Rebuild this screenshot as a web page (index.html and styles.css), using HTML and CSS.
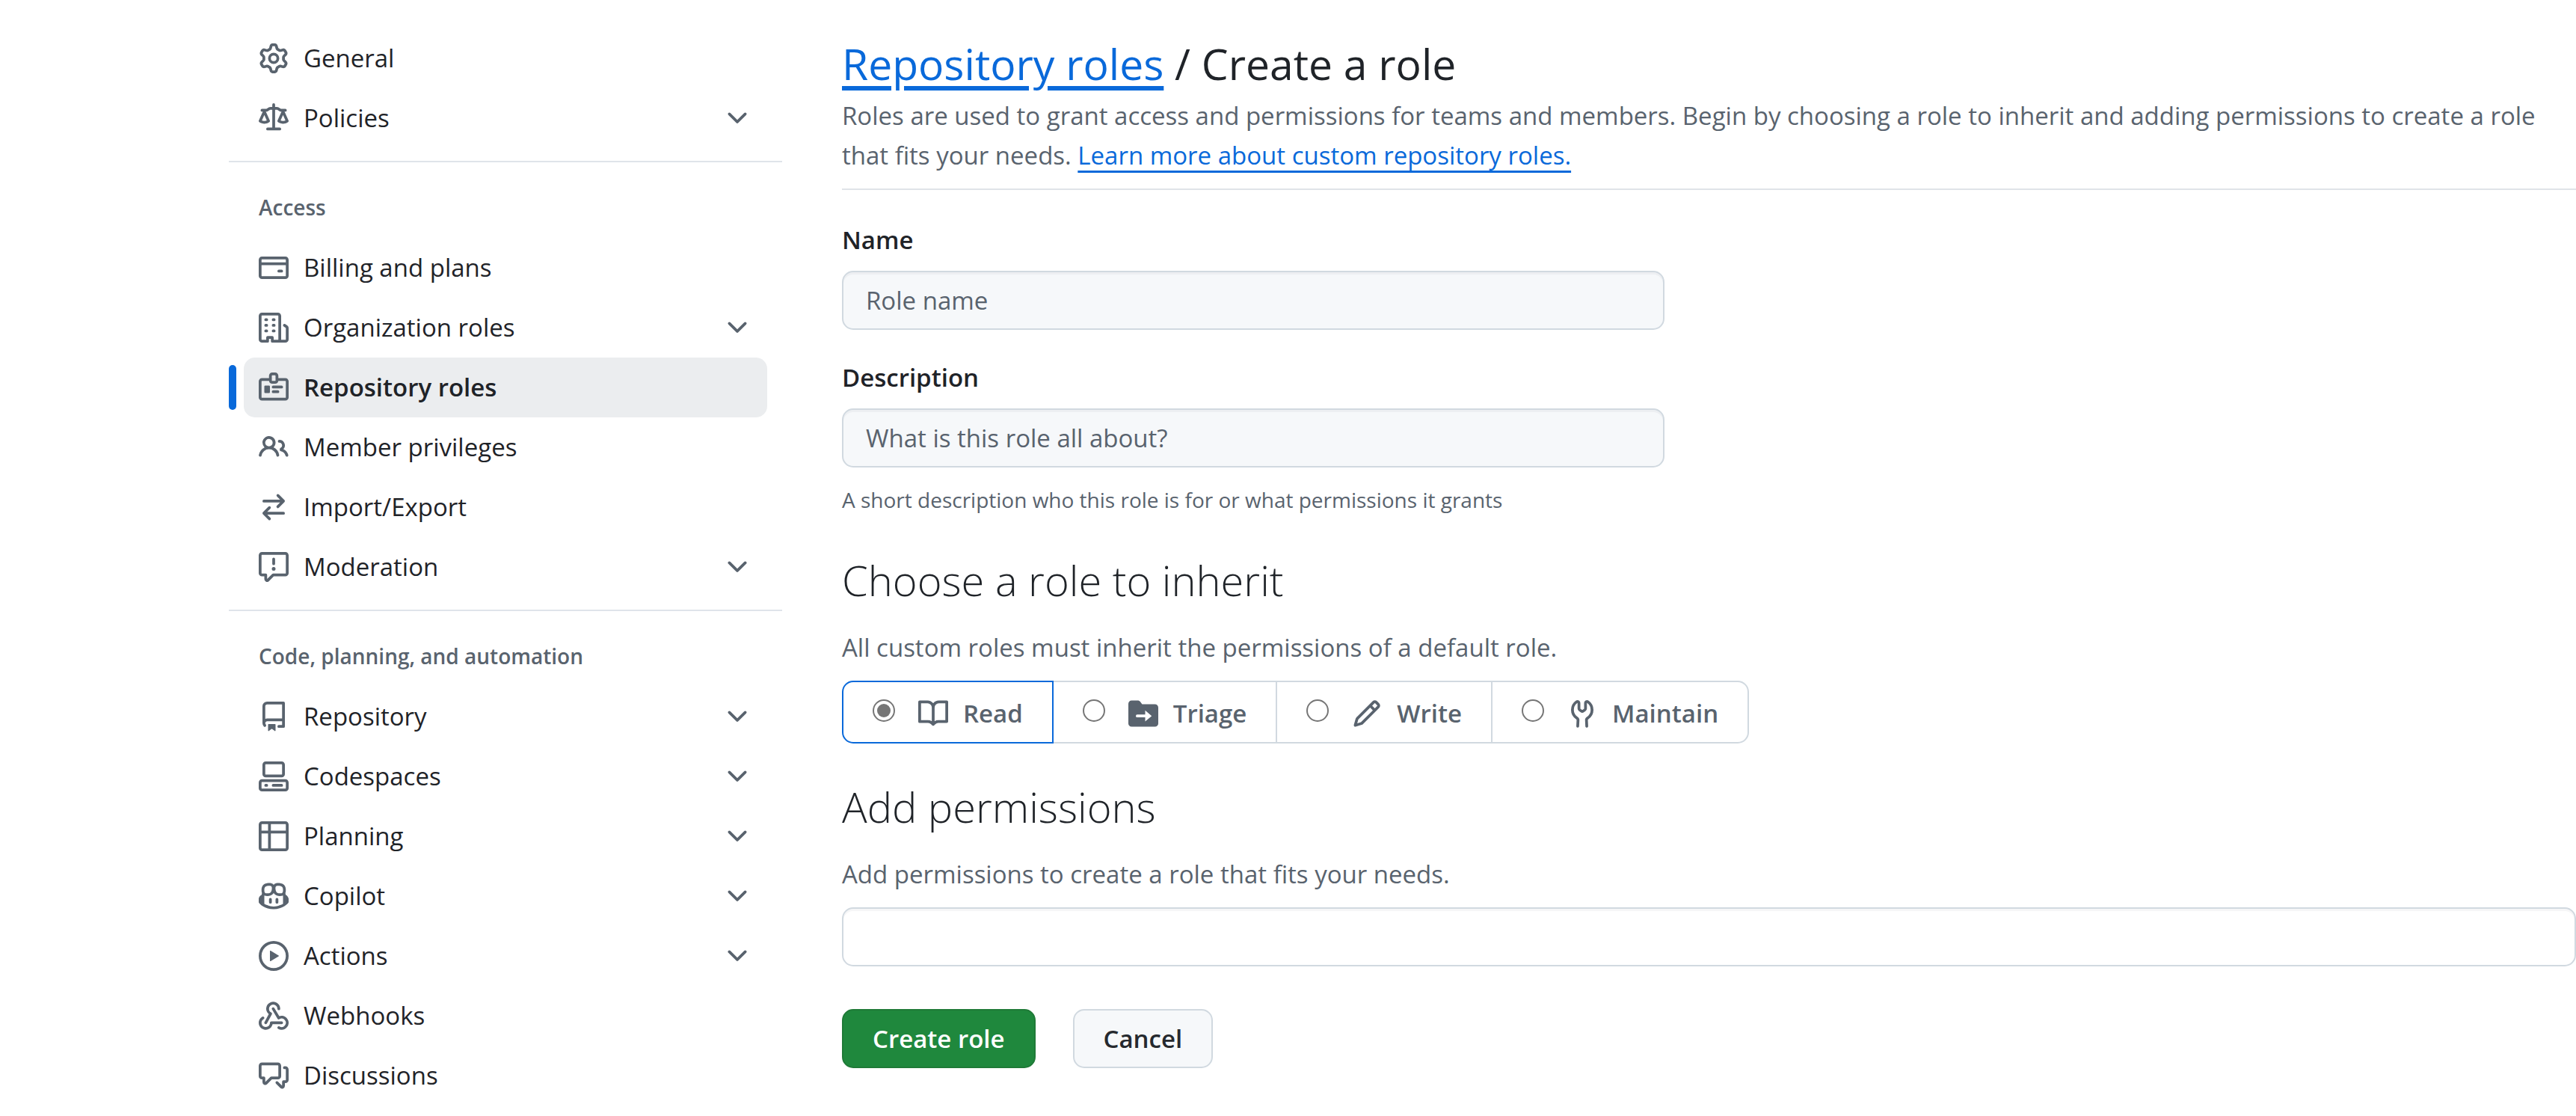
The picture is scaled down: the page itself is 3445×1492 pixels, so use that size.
FILE: index.html
```html
<!DOCTYPE html>
<html lang="en">
<head>
<meta charset="utf-8">
<title>Create a role</title>
<link rel="stylesheet" href="styles.css">
</head>
<body>
<svg class="sprite" aria-hidden="true">
  <symbol id="gear" viewBox="0 0 16 16"><path d="M8 0a8.2 8.2 0 0 1 .701.031C9.444.095 9.99.645 10.16 1.29l.288 1.107c.018.066.079.158.212.224.231.114.454.243.668.386.123.082.233.09.299.071l1.103-.303c.644-.176 1.392.021 1.82.63.27.385.506.792.704 1.218.315.675.111 1.422-.364 1.891l-.814.806c-.049.048-.098.147-.088.294.016.257.016.515 0 .772-.01.147.038.246.088.294l.814.806c.475.469.679 1.216.364 1.891a7.977 7.977 0 0 1-.704 1.217c-.428.61-1.176.807-1.82.63l-1.102-.302c-.067-.019-.177-.011-.3.071a5.909 5.909 0 0 1-.668.386c-.133.066-.194.158-.211.224l-.29 1.106c-.168.646-.715 1.196-1.458 1.26a8.006 8.006 0 0 1-1.402 0c-.743-.064-1.289-.614-1.458-1.26l-.289-1.106c-.018-.066-.079-.158-.212-.224a5.738 5.738 0 0 1-.668-.386c-.123-.082-.233-.09-.299-.071l-1.103.303c-.644.176-1.392-.021-1.82-.63a8.12 8.12 0 0 1-.704-1.218c-.315-.675-.111-1.422.363-1.891l.815-.806c.05-.048.098-.147.088-.294a6.214 6.214 0 0 1 0-.772c.01-.147-.038-.246-.088-.294l-.815-.806C.635 6.045.431 5.298.746 4.623a7.92 7.92 0 0 1 .704-1.217c.428-.61 1.176-.807 1.82-.63l1.102.302c.067.019.177.011.3-.071.214-.143.437-.272.668-.386.133-.066.194-.158.211-.224l.29-1.106C6.009.645 6.556.095 7.299.03 7.53.01 7.764 0 8 0Zm-.571 1.525c-.036.003-.108.036-.137.146l-.289 1.105c-.147.561-.549.967-.998 1.189-.173.086-.34.183-.5.29-.417.278-.97.423-1.529.27l-1.103-.303c-.109-.03-.175.016-.195.045-.22.312-.412.644-.573.99-.014.031-.021.11.059.19l.815.806c.411.406.562.957.53 1.456a4.709 4.709 0 0 0 0 .582c.032.499-.119 1.05-.53 1.456l-.815.806c-.081.08-.073.159-.059.19.162.346.353.677.573.989.02.03.085.076.195.046l1.102-.303c.56-.153 1.113-.008 1.53.27.161.107.328.204.501.29.447.222.85.629.997 1.189l.289 1.105c.029.109.101.143.137.146a6.6 6.6 0 0 0 1.142 0c.036-.003.108-.036.137-.146l.289-1.105c.147-.561.549-.967.998-1.189.173-.086.34-.183.5-.29.417-.278.97-.423 1.529-.27l1.103.303c.109.029.175-.016.195-.045.22-.313.411-.644.573-.99.014-.031.021-.11-.059-.19l-.815-.806c-.411-.406-.562-.957-.53-1.456a4.709 4.709 0 0 0 0-.582c-.032-.499.119-1.05.53-1.456l.815-.806c.081-.08.073-.159.059-.19a6.464 6.464 0 0 0-.573-.989c-.02-.03-.085-.076-.195-.046l-1.102.303c-.56.153-1.113.008-1.53-.27a4.44 4.44 0 0 0-.501-.29c-.447-.222-.85-.629-.997-1.189l-.289-1.105c-.029-.11-.101-.143-.137-.146a6.6 6.6 0 0 0-1.142 0ZM11 8a3 3 0 1 1-6 0 3 3 0 0 1 6 0ZM9.5 8a1.5 1.5 0 1 0-3.001.001A1.5 1.5 0 0 0 9.5 8Z"/></symbol>
  <symbol id="law" viewBox="0 0 16 16"><path d="M8.75.75V2h.985c.304 0 .603.08.867.231l1.29.736c.038.022.08.033.124.033h2.234a.75.75 0 0 1 0 1.5h-.427l2.111 4.692a.75.75 0 0 1-.154.838l-.53-.53.529.531-.001.002-.002.002-.006.006-.006.005-.01.01-.045.04c-.21.176-.441.327-.686.45C14.556 10.78 13.88 11 13 11a4.498 4.498 0 0 1-2.023-.454 3.544 3.544 0 0 1-.686-.45l-.045-.04-.016-.015-.006-.006-.004-.004v-.001a.75.75 0 0 1-.154-.838L12.178 4.5h-.162c-.305 0-.604-.079-.868-.231l-1.29-.736a.245.245 0 0 0-.124-.033H8.75V13h2.5a.75.75 0 0 1 0 1.5h-6.5a.75.75 0 0 1 0-1.5h2.5V3.5h-.984a.245.245 0 0 0-.124.033l-1.289.737c-.265.15-.564.23-.869.23h-.162l2.112 4.692a.75.75 0 0 1-.154.838l-.53-.53.529.531-.001.002-.002.002-.006.006-.016.015-.045.04c-.21.176-.441.327-.686.45C4.556 10.78 3.88 11 3 11a4.498 4.498 0 0 1-2.023-.454 3.544 3.544 0 0 1-.686-.45l-.045-.04-.016-.015-.006-.006-.004-.004v-.001a.75.75 0 0 1-.154-.838L2.178 4.5H1.75a.75.75 0 0 1 0-1.5h2.234a.249.249 0 0 0 .125-.033l1.288-.737c.265-.15.564-.23.869-.23h.984V.75a.75.75 0 0 1 1.5 0Zm2.945 8.477c.285.135.718.273 1.305.273s1.02-.138 1.305-.273L13 6.327Zm-10 0c.285.135.718.273 1.305.273s1.02-.138 1.305-.273L3 6.327Z"/></symbol>
  <symbol id="card" viewBox="0 0 16 16"><path d="M14.25 2C15.216 2 16 2.784 16 3.75v8.5A1.75 1.75 0 0 1 14.25 14H1.75A1.75 1.75 0 0 1 0 12.25v-8.5C0 2.784.784 2 1.75 2ZM1.5 6.6v5.65c0 .138.112.25.25.25h12.5a.25.25 0 0 0 .25-.25V6.6Zm13-1.5V3.75a.25.25 0 0 0-.25-.25H1.75a.25.25 0 0 0-.25.25V5.1ZM10.75 9h1.5a.75.75 0 0 1 0 1.5h-1.5a.75.75 0 0 1 0-1.5Z"/></symbol>
  <symbol id="organization" viewBox="0 0 16 16"><path d="M1.75 16A1.75 1.75 0 0 1 0 14.25V1.75C0 .784.784 0 1.75 0h8.5C11.216 0 12 .784 12 1.75v12.5c0 .085-.006.168-.018.25h2.268a.25.25 0 0 0 .25-.25V8.285a.25.25 0 0 0-.111-.208l-1.055-.703a.749.749 0 1 1 .832-1.248l1.055.703c.487.325.779.871.779 1.456v5.965A1.75 1.75 0 0 1 14.25 16h-3.5a.766.766 0 0 1-.197-.026c-.099.017-.2.026-.303.026h-3a.75.75 0 0 1-.75-.75V14h-1v1.25a.75.75 0 0 1-.75.75Zm-.25-1.75c0 .138.112.25.25.25H4v-1.25a.75.75 0 0 1 .75-.75h2.5a.75.75 0 0 1 .75.75v1.25h2.25a.25.25 0 0 0 .25-.25V1.75a.25.25 0 0 0-.25-.25h-8.5a.25.25 0 0 0-.25.25ZM3.75 6h.5a.75.75 0 0 1 0 1.5h-.5a.75.75 0 0 1 0-1.5ZM3 3.75A.75.75 0 0 1 3.75 3h.5a.75.75 0 0 1 0 1.5h-.5A.75.75 0 0 1 3 3.75Zm4 3A.75.75 0 0 1 7.75 6h.5a.75.75 0 0 1 0 1.5h-.5A.75.75 0 0 1 7 6.75ZM7.75 3h.5a.75.75 0 0 1 0 1.5h-.5a.75.75 0 0 1 0-1.5ZM3 9.75A.75.75 0 0 1 3.75 9h.5a.75.75 0 0 1 0 1.5h-.5A.75.75 0 0 1 3 9.75ZM7.75 9h.5a.75.75 0 0 1 0 1.5h-.5a.75.75 0 0 1 0-1.5Z"/></symbol>
  <symbol id="badge" viewBox="0 0 16 16"><path d="M3 7.5a.5.5 0 0 1 .5-.5h2a.5.5 0 0 1 .5.5v3a.5.5 0 0 1-.5.5h-2a.5.5 0 0 1-.5-.5Zm10 .25a.75.75 0 0 1-.75.75h-4.500a.75.75 0 0 1 0-1.500h4.500a.75.75 0 0 1 .75.75ZM10.250 11h-2.500a.75.75 0 0 1 0-1.500h2.500a.75.75 0 0 1 0 1.500Z"/><path d="M7.250 0h1.500c.966 0 1.750.784 1.750 1.750V3h3.750c.966 0 1.750.784 1.750 1.750v8.500A1.750 1.750 0 0 1 14.250 15H1.750A1.750 1.750 0 0 1 0 13.250v-8.500C0 3.784.784 3 1.750 3H5.500V1.750C5.500.784 6.284 0 7.250 0Zm3.232 4.500A1.750 1.750 0 0 1 8.750 6h-1.500a1.750 1.750 0 0 1-1.732-1.500H1.750a.250.250 0 0 0-.250.250v8.500c0 .138.112.250.250.250h12.500a.250.250 0 0 0 .250-.250v-8.500a.250.250 0 0 0-.250-.250ZM7.250 1.500a.250.250 0 0 0-.250.250v2.500c0 .138.112.250.250.250h1.500A.250.250 0 0 0 9 4.250v-2.500a.250.250 0 0 0-.250-.250Z"/></symbol>
  <symbol id="people" viewBox="0 0 16 16"><path d="M2 5.500a3.500 3.500 0 1 1 5.898 2.549 5.508 5.508 0 0 1 3.034 4.084.75.75 0 1 1-1.482.235 4 4 0 0 0-7.900 0 .75.75 0 0 1-1.482-.236A5.507 5.507 0 0 1 3.102 8.050 3.493 3.493 0 0 1 2 5.500ZM11 4a3.001 3.001 0 0 1 2.220 5.018 5.010 5.010 0 0 1 2.560 3.012.749.749 0 0 1-.885.954.752.752 0 0 1-.549-.514 3.507 3.507 0 0 0-2.522-2.372.75.75 0 0 1-.574-.730v-.352a.75.75 0 0 1 .416-.672A1.500 1.500 0 0 0 11 5.500.75.75 0 0 1 11 4Zm-5.500-.500a2 2 0 1 0-.001 3.999A2 2 0 0 0 5.500 3.500Z"/></symbol>
  <symbol id="swap" viewBox="0 0 16 16"><path d="M5.220 14.780a.75.75 0 0 0 1.060-1.060L4.560 12h8.690a.75.75 0 0 0 0-1.500H4.560l1.720-1.720a.75.75 0 0 0-1.060-1.060l-3 3a.75.75 0 0 0 0 1.060l3 3Zm5.560-6.500a.75.75 0 1 1-1.060-1.060l1.720-1.720H2.750a.75.75 0 0 1 0-1.500h8.690L9.720 2.280a.75.75 0 0 1 1.060-1.060l3 3a.75.75 0 0 1 0 1.060l-3 3Z"/></symbol>
  <symbol id="report" viewBox="0 0 16 16"><path d="M0 1.750C0 .784.784 0 1.750 0h12.500C15.216 0 16 .784 16 1.750v9.500A1.750 1.750 0 0 1 14.250 13H8.060l-2.573 2.573A1.458 1.458 0 0 1 3 14.543V13H1.750A1.750 1.750 0 0 1 0 11.250Zm1.750-.250a.250.250 0 0 0-.250.250v9.500c0 .138.112.250.250.250h2a.75.75 0 0 1 .75.75v2.190l2.720-2.720a.749.749 0 0 1 .530-.220h6.500a.250.250 0 0 0 .250-.250v-9.500a.250.250 0 0 0-.250-.250Zm7 2.250v2.500a.75.75 0 0 1-1.500 0v-2.500a.75.75 0 0 1 1.500 0ZM9 9a1 1 0 1 1-2 0 1 1 0 0 1 2 0Z"/></symbol>
  <symbol id="repo" viewBox="0 0 16 16"><path d="M2 2.500A2.500 2.500 0 0 1 4.500 0h8.750a.75.75 0 0 1 .75.75v12.500a.75.75 0 0 1-.75.75h-2.500a.75.75 0 0 1 0-1.500h1.750v-2h-8a1 1 0 0 0-.714 1.700.75.75 0 1 1-1.072 1.050A2.495 2.495 0 0 1 2 11.500Zm10.500-1h-8a1 1 0 0 0-1 1v6.708A2.486 2.486 0 0 1 4.500 9h8ZM5 12.250a.250.250 0 0 1 .250-.250h3.500a.250.250 0 0 1 .250.250v3.250a.250.250 0 0 1-.400.200l-1.450-1.087a.249.249 0 0 0-.300 0L5.400 15.700a.250.250 0 0 1-.400-.200Z"/></symbol>
  <symbol id="codespaces" viewBox="0 0 16 16"><path d="M0 11.250c0-.966.784-1.750 1.750-1.750h12.500c.966 0 1.750.784 1.750 1.750v3A1.750 1.750 0 0 1 14.250 16H1.750A1.750 1.750 0 0 1 0 14.250Zm2-9.500C2 .784 2.784 0 3.750 0h8.500C13.216 0 14 .784 14 1.750v5a1.750 1.750 0 0 1-1.750 1.750h-8.500A1.750 1.750 0 0 1 2 6.750Zm1.750-.250a.250.250 0 0 0-.250.250v5c0 .138.112.250.250.250h8.500a.250.250 0 0 0 .250-.250v-5a.250.250 0 0 0-.250-.250Zm-2 9.500a.250.250 0 0 0-.250.250v3c0 .138.112.250.250.250h12.500a.250.250 0 0 0 .250-.250v-3a.250.250 0 0 0-.250-.250Z"/><path d="M7 12.750a.75.75 0 0 1 .75-.75h4.500a.75.75 0 0 1 0 1.500h-4.500a.75.75 0 0 1-.75-.75Zm-4 0a.75.75 0 0 1 .75-.75h.500a.75.75 0 0 1 0 1.500h-.500a.75.75 0 0 1-.75-.75Z"/></symbol>
  <symbol id="table" viewBox="0 0 16 16"><path d="M0 1.750C0 .784.784 0 1.750 0h12.500C15.216 0 16 .784 16 1.750v12.500A1.750 1.750 0 0 1 14.250 16H1.750A1.750 1.750 0 0 1 0 14.250ZM6.500 6.500v8h7.750a.250.250 0 0 0 .250-.250V6.500Zm8-1.500V1.750a.250.250 0 0 0-.250-.250H6.500V5Zm-13 1.500v7.750c0 .138.112.250.250.250H5v-8ZM5 5V1.500H1.750a.250.250 0 0 0-.250.250V5Z"/></symbol>
  <symbol id="copilot" viewBox="0 0 16 16"><path d="M7.998 15.035c-4.562 0-7.873-2.914-7.998-3.749V9.338c.085-.628.677-1.686 1.588-2.065.013-.070.024-.143.036-.218.029-.183.060-.384.126-.612-.201-.508-.254-1.084-.254-1.656 0-.870.128-1.769.693-2.484.579-.733 1.494-1.124 2.724-1.261 1.206-.134 2.262.034 2.944.765.050.053.096.108.139.165.044-.057.094-.112.143-.165.682-.731 1.738-.899 2.944-.765 1.230.137 2.145.528 2.724 1.261.566.715.693 1.614.693 2.484 0 .572-.053 1.148-.254 1.656.066.228.098.429.126.612.012.076.024.148.037.218.924.385 1.522 1.471 1.591 2.095v1.872c0 .766-3.351 3.795-8.002 3.795Zm0-1.485c2.280 0 4.584-1.110 5.002-1.433V7.862l-.023-.116c-.490.210-1.075.291-1.727.291-1.146 0-2.059-.327-2.710-.991A3.222 3.222 0 0 1 8 6.303a3.240 3.240 0 0 1-.544.743c-.650.664-1.563.991-2.710.991-.652 0-1.236-.081-1.727-.291l-.023.116v4.255c.419.323 2.722 1.433 5.002 1.433ZM6.762 2.830c-.193-.206-.637-.413-1.682-.297-1.019.113-1.479.404-1.713.700-.247.312-.369.789-.369 1.554 0 .793.129 1.171.308 1.371.162.181.519.379 1.442.379.853 0 1.339-.235 1.638-.540.315-.322.527-.827.617-1.553.117-.935-.037-1.395-.241-1.614Zm4.155-.297c-1.044-.116-1.488.091-1.681.297-.204.219-.359.679-.242 1.614.091.726.303 1.231.618 1.553.299.305.784.540 1.638.540.922 0 1.280-.198 1.442-.379.179-.200.308-.578.308-1.371 0-.765-.123-1.242-.370-1.554-.233-.296-.693-.587-1.713-.700Z"/><path d="M6.250 9.037a.75.75 0 0 1 .75.75v1.501a.75.75 0 0 1-1.500 0V9.787a.75.75 0 0 1 .75-.75Zm4.250.75v1.501a.75.75 0 0 1-1.500 0V9.787a.75.75 0 0 1 1.500 0Z"/></symbol>
  <symbol id="play" viewBox="0 0 16 16"><path d="M8 0a8 8 0 1 1 0 16A8 8 0 0 1 8 0ZM1.500 8a6.500 6.500 0 1 0 13 0 6.500 6.500 0 0 0-13 0Zm4.879-2.773 4.264 2.559a.250.250 0 0 1 0 .428l-4.264 2.559A.250.250 0 0 1 6 10.559V5.442a.250.250 0 0 1 .379-.215Z"/></symbol>
  <symbol id="webhook" viewBox="0 0 16 16"><path d="M5.500 4.250a2.250 2.250 0 0 1 4.500 0 .75.75 0 0 0 1.500 0 3.750 3.750 0 1 0-6.140 2.889l-2.272 4.258a.75.75 0 0 0 1.324.706L7 7.250a.75.75 0 0 0-.309-1.015A2.250 2.250 0 0 1 5.500 4.250Z"/><path d="M7.364 3.607a.75.75 0 0 1 1.030.257l2.608 4.349a3.750 3.750 0 1 1-.628 6.785.75.75 0 0 1 .752-1.299 2.250 2.250 0 1 0-.033-3.880.75.75 0 0 1-1.030-.256L7.107 4.636a.75.75 0 0 1 .257-1.029Z"/><path d="M2.900 8.776A.75.75 0 0 1 2.625 9.800 2.250 2.250 0 1 0 6 11.750a.75.75 0 0 1 .75-.751h5.500a.75.75 0 0 1 0 1.501H7.425a3.751 3.751 0 1 1-5.550-3.998.75.75 0 0 1 1.025.274Z"/></symbol>
  <symbol id="discussion" viewBox="0 0 16 16"><path d="M1.750 1h8.500c.966 0 1.750.784 1.750 1.750v5.500A1.750 1.750 0 0 1 10.250 10H7.061l-2.574 2.573A1.458 1.458 0 0 1 2 11.543V10h-.250A1.750 1.750 0 0 1 0 8.250v-5.500C0 1.784.784 1 1.750 1ZM1.500 2.750v5.500c0 .138.112.250.250.250h1a.75.75 0 0 1 .75.75v2.190l2.720-2.720a.749.749 0 0 1 .530-.220h3.500a.250.250 0 0 0 .250-.250v-5.500a.250.250 0 0 0-.250-.250h-8.500a.250.250 0 0 0-.250.250Zm13 2a.250.250 0 0 0-.250-.250h-.500a.75.75 0 0 1 0-1.500h.500c.966 0 1.750.784 1.750 1.750v5.500A1.750 1.750 0 0 1 14.250 12H14v1.543a1.458 1.458 0 0 1-2.487 1.030L9.220 12.280a.749.749 0 0 1 .326-1.275.749.749 0 0 1 .734.215l2.220 2.220v-2.190a.75.75 0 0 1 .75-.75h1a.250.250 0 0 0 .250-.250Z"/></symbol>
  <symbol id="chevron" viewBox="0 0 16 16"><path d="M12.780 5.220a.749.749 0 0 1 0 1.060l-4.250 4.250a.749.749 0 0 1-1.060 0L3.220 6.280a.749.749 0 1 1 1.060-1.060L8 8.939l3.720-3.719a.749.749 0 0 1 1.060 0Z"/></symbol>
  <symbol id="book" viewBox="0 0 16 16"><path d="M0 1.750A.75.75 0 0 1 .75 1h4.253c1.227 0 2.317.590 3 1.501A3.743 3.743 0 0 1 11.006 1h4.245a.75.75 0 0 1 .75.75v10.500a.75.75 0 0 1-.75.75h-4.507a2.250 2.250 0 0 0-1.591.659l-.622.621a.75.75 0 0 1-1.060 0l-.622-.621A2.250 2.250 0 0 0 5.258 13H.75a.75.75 0 0 1-.75-.75Zm7.251 10.324.004-5.073-.002-2.253A2.250 2.250 0 0 0 5.003 2.500H1.500v9h3.757a3.750 3.750 0 0 1 1.994.574ZM8.755 4.750l-.004 7.322a3.752 3.752 0 0 1 1.992-.572H14.500v-9h-3.495a2.250 2.250 0 0 0-2.250 2.250Z"/></symbol>
  <symbol id="folder" viewBox="0 0 16 16"><path fill-rule="evenodd" d="M1.750 1A1.750 1.750 0 0 0 0 2.750v10.500C0 14.216.784 15 1.750 15h12.500A1.750 1.750 0 0 0 16 13.250v-8.500A1.750 1.750 0 0 0 14.250 3H7.500a.250.250 0 0 1-.200-.100l-.900-1.200C6.070 1.260 5.550 1 5 1ZM9 6.300l3.500 2.950L9 12.200V10H4.750a.75.75 0 0 1 0-1.500H9Z"/></symbol>
  <symbol id="pencil" viewBox="0 0 16 16"><path d="M11.013 1.427a1.750 1.750 0 0 1 2.474 0l1.086 1.086a1.750 1.750 0 0 1 0 2.474l-8.610 8.610c-.210.210-.470.364-.756.445l-3.251.930a.75.75 0 0 1-.927-.928l.929-3.250c.081-.286.235-.547.445-.758l8.610-8.610Zm.176 4.823L9.750 4.810l-6.286 6.287a.253.253 0 0 0-.064.108l-.558 1.953 1.953-.558a.253.253 0 0 0 .108-.064Zm1.238-3.763a.250.250 0 0 0-.354 0L10.811 3.750l1.439 1.440 1.263-1.263a.250.250 0 0 0 0-.354Z"/></symbol>
  <symbol id="tools" viewBox="0 0 16 16"><path d="M5.433 2.304A4.492 4.492 0 0 0 3.500 6c0 1.598.832 3.002 2.090 3.802.518.328.929.923.902 1.640v.008l-.164 3.337a.75.75 0 1 1-1.498-.073l.163-3.330c.002-.085-.050-.216-.207-.316A5.996 5.996 0 0 1 2 6a5.994 5.994 0 0 1 2.567-4.920 1.482 1.482 0 0 1 1.673-.040c.462.296.760.827.760 1.423v2.820c0 .082.041.160.110.206l.750.510a.250.250 0 0 0 .280 0l.750-.510A.249.249 0 0 0 9 5.282V2.463c0-.596.298-1.127.760-1.423a1.482 1.482 0 0 1 1.673.040A5.994 5.994 0 0 1 14 6a5.996 5.996 0 0 1-2.786 5.068c-.157.100-.209.230-.207.315l.163 3.330a.752.752 0 0 1-1.094.714.750.750 0 0 1-.404-.640l-.164-3.345c-.027-.717.384-1.312.902-1.640A4.495 4.495 0 0 0 12.500 6a4.492 4.492 0 0 0-1.933-3.696c-.024.017-.067.067-.067.160v2.818a1.750 1.750 0 0 1-.767 1.448l-.750.510a1.750 1.750 0 0 1-1.966 0l-.750-.510A1.750 1.750 0 0 1 5.500 5.282V2.463c0-.092-.043-.142-.067-.159Z"/></symbol>
</svg>
<div class="layout">
  <nav class="sidebar" aria-label="Settings">
    <ul class="nav-list">
      <li><a class="nav-item" href="#"><svg class="icon"><use href="#gear"/></svg><span class="nav-text">General</span></a></li>
      <li><button class="nav-item" type="button"><svg class="icon"><use href="#law"/></svg><span class="nav-text">Policies</span><svg class="icon"><use href="#chevron"/></svg></button></li>
    </ul>
    <h2 class="nav-heading">Access</h2>
    <ul class="nav-list">
      <li><a class="nav-item" href="#"><svg class="icon"><use href="#card"/></svg><span class="nav-text">Billing and plans</span></a></li>
      <li><button class="nav-item" type="button"><svg class="icon"><use href="#organization"/></svg><span class="nav-text">Organization roles</span><svg class="icon"><use href="#chevron"/></svg></button></li>
      <li><a class="nav-item current" href="#" aria-current="page"><svg class="icon"><use href="#badge"/></svg><span class="nav-text">Repository roles</span></a></li>
      <li><a class="nav-item" href="#"><svg class="icon"><use href="#people"/></svg><span class="nav-text">Member privileges</span></a></li>
      <li><a class="nav-item" href="#"><svg class="icon"><use href="#swap"/></svg><span class="nav-text">Import/Export</span></a></li>
      <li><button class="nav-item" type="button"><svg class="icon"><use href="#report"/></svg><span class="nav-text">Moderation</span><svg class="icon"><use href="#chevron"/></svg></button></li>
    </ul>
    <h2 class="nav-heading">Code, planning, and automation</h2>
    <ul class="nav-list">
      <li><button class="nav-item" type="button"><svg class="icon"><use href="#repo"/></svg><span class="nav-text">Repository</span><svg class="icon"><use href="#chevron"/></svg></button></li>
      <li><button class="nav-item" type="button"><svg class="icon"><use href="#codespaces"/></svg><span class="nav-text">Codespaces</span><svg class="icon"><use href="#chevron"/></svg></button></li>
      <li><button class="nav-item" type="button"><svg class="icon"><use href="#table"/></svg><span class="nav-text">Planning</span><svg class="icon"><use href="#chevron"/></svg></button></li>
      <li><button class="nav-item" type="button"><svg class="icon"><use href="#copilot"/></svg><span class="nav-text">Copilot</span><svg class="icon"><use href="#chevron"/></svg></button></li>
      <li><button class="nav-item" type="button"><svg class="icon"><use href="#play"/></svg><span class="nav-text">Actions</span><svg class="icon"><use href="#chevron"/></svg></button></li>
      <li><a class="nav-item" href="#"><svg class="icon"><use href="#webhook"/></svg><span class="nav-text">Webhooks</span></a></li>
      <li><a class="nav-item" href="#"><svg class="icon"><use href="#discussion"/></svg><span class="nav-text">Discussions</span></a></li>
    </ul>
  </nav>
  <main class="content">
    <header class="page-head">
      <h1 class="title"><a href="#">Repository roles</a> / Create a role</h1>
      <p class="text">Roles are used to grant access and permissions for teams and members. Begin by choosing a role to inherit and adding permissions to create a role that fits your needs. <a href="#">Learn more about custom repository roles.</a></p>
    </header>
    <form class="form">
      <div class="field">
        <label class="label" for="role-name">Name</label>
        <input class="input" id="role-name" type="text" placeholder="Role name">
      </div>
      <div class="field">
        <label class="label" for="role-description">Description</label>
        <input class="input" id="role-description" type="text" placeholder="What is this role all about?" aria-describedby="role-note">
      </div>
      <p class="note" id="role-note">A short description who this role is for or what permissions it grants</p>
      <h2 class="subtitle" id="inherit">Choose a role to inherit</h2>
      <p class="text">All custom roles must inherit the permissions of a default role.</p>
      <div class="options" role="radiogroup" aria-labelledby="inherit">
        <label class="option"><input class="radio" type="radio" name="base" checked><svg class="icon"><use href="#book"/></svg>Read</label>
        <label class="option"><input class="radio" type="radio" name="base"><svg class="icon"><use href="#folder"/></svg>Triage</label>
        <label class="option"><input class="radio" type="radio" name="base"><svg class="icon"><use href="#pencil"/></svg>Write</label>
        <label class="option"><input class="radio" type="radio" name="base"><svg class="icon"><use href="#tools"/></svg>Maintain</label>
      </div>
      <h2 class="subtitle" id="permissions">Add permissions</h2>
      <p class="text">Add permissions to create a role that fits your needs.</p>
      <input class="input input-wide" type="text" aria-labelledby="permissions">
      <div class="actions">
        <button class="button primary" type="submit">Create role</button>
        <button class="button" type="button">Cancel</button>
      </div>
    </form>
  </main>
</div>
</body>
</html>
```
FILE: styles.css
```css
* {
  box-sizing: border-box;
}

body {
  margin: 0;
  background: #fff;
  color: #1f2328;
  font-family: "Open Sans", "Noto Sans", sans-serif;
  font-size: 33px;
  line-height: 50px;
}

h1, h2, p, ul {
  margin: 0;
  padding: 0;
}

a {
  color: #0969da;
  text-decoration-thickness: 3px;
  text-underline-offset: 8px;
}

.sprite {
  display: none;
}

.layout {
  display: grid;
  grid-template-columns: 740px minmax(0, 1fr);
  gap: 80px;
  padding: 38px 0 12px 306px;
}

.icon {
  flex: none;
  width: 40px;
  height: 40px;
  fill: #59636e;
}

/* Sidebar */
.nav-list {
  padding: 0 20px;
  list-style: none;
}

.nav-item {
  position: relative;
  display: flex;
  align-items: center;
  gap: 20px;
  width: 100%;
  height: 80px;
  padding: 0 20px;
  border: 0;
  border-radius: 15px;
  background: none;
  color: #1f2328;
  font: inherit;
  text-align: left;
  text-decoration: none;
}

.nav-text {
  flex: 1;
}

.nav-item.current {
  background: #ebedef;
  font-weight: 600;
}

.nav-item.current::before {
  content: "";
  position: absolute;
  left: -20px;
  top: 10px;
  width: 10px;
  height: 60px;
  border-radius: 5px;
  background: #0969da;
}

.nav-heading {
  margin-top: 17px;
  padding: 40px 40px 21px;
  border-top: 2px solid #dfe4ea;
  color: #59636e;
  font-size: 28px;
  font-weight: 600;
  line-height: 40px;
}

/* Page header */
.page-head {
  padding-bottom: 18px;
  border-bottom: 2px solid #dfe3e8;
}

.title {
  padding-top: 4px;
  font-size: 57px;
  font-weight: 400;
  line-height: 86px;
}

.title a {
  text-decoration-thickness: 6px;
}

.text {
  color: #59636e;
  line-height: 53px;
}

/* Form */
.form {
  padding-top: 3px;
}

.field {
  margin-top: 39px;
}

.label {
  display: block;
  margin-bottom: 16px;
  font-weight: 600;
}

.input {
  display: block;
  width: 1100px;
  max-width: 100%;
  height: 79px;
  padding: 0 30px;
  border: 2px solid #d1d9e0;
  border-radius: 15px;
  background: #f6f8fa;
  box-shadow: inset 0 3px 0 rgba(31, 35, 40, 0.04);
  color: #1f2328;
  font: inherit;
}

.input::placeholder {
  color: #59636e;
  opacity: 1;
}

.input-wide {
  width: 100%;
  margin-top: 18px;
  background: #fff;
}

.note {
  margin-top: 20px;
  color: #59636e;
  font-size: 28px;
  line-height: 46px;
}

.subtitle {
  margin: 39px 0 19px;
  font-size: 56px;
  font-weight: 300;
  line-height: 90px;
}

.options {
  display: flex;
  margin-top: 18px;
}

.option {
  display: flex;
  align-items: center;
  gap: 20px;
  height: 84px;
  margin-left: -2px;
  padding: 4px 39px 0;
  border: 2px solid #d1d9e0;
  color: #59636e;
  font-weight: 600;
}

.option:first-child {
  margin-left: 0;
  border-radius: 15px 0 0 15px;
}

.option:last-child {
  border-radius: 0 15px 15px 0;
}

.option:has(:checked) {
  z-index: 1;
  border-color: #0969da;
}

.radio {
  appearance: none;
  width: 30px;
  height: 30px;
  margin: 0 11px 8px 0;
  padding: 4px;
  border: 2px solid #767676;
  border-radius: 50%;
}

.radio:checked {
  background: #767676 content-box;
}

.actions {
  display: flex;
  gap: 50px;
  margin-top: 57px;
}

.button {
  height: 79px;
  padding: 0 39px;
  border: 2px solid #d1d9e0;
  border-radius: 15px;
  background: #f6f8fa;
  color: #25292e;
  font: inherit;
  font-weight: 600;
}

.button.primary {
  border-color: #1f7a37;
  background: #1f883d;
  color: #fff;
}
```
